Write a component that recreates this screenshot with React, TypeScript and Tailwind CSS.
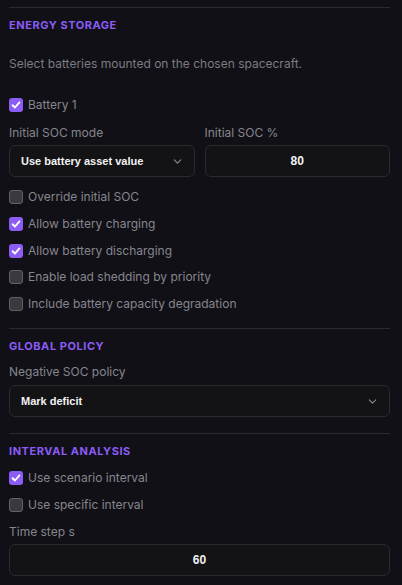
import { ChevronDown } from "lucide-react"

const sans = { fontFamily: "Inter, 'Noto Sans', sans-serif" }

function Check({ checked, label }: { checked: boolean; label: string }) {
  return (
    <div className="flex h-4 items-center gap-[5px]">
      {checked ? (
        <span className="flex h-[14px] w-[14px] items-center justify-center rounded-[3px] bg-[#8b5cf6]">
          <svg width="10" height="10" viewBox="0 0 10 10">
            <path d="M1.6 5.2 L4 7.5 L8.4 2.4" fill="none" stroke="#fff" strokeWidth="1.9" strokeLinecap="round" strokeLinejoin="round" />
          </svg>
        </span>
      ) : (
        <span className="h-[14px] w-[14px] rounded-[3px] border border-[#606066] bg-[#3a3a3e]" />
      )}
      <span className="text-[12px] leading-4 text-[#86868d]">{label}</span>
    </div>
  )
}

function Heading({ children, className }: { children: string; className: string }) {
  return (
    <div className={`text-[11px] font-bold leading-4 tracking-[0.05em] text-[#8b5cf6] ${className}`}>
      {children}
    </div>
  )
}

function Select({ value }: { value: string }) {
  return (
    <div className="flex h-[32px] items-center justify-between rounded-md border border-[#2a2a2f] bg-[#131316] pl-[11px] pr-[10px]">
      <span className="text-[11px] font-bold text-[#f2f2f2]" style={{ fontFamily: "'Liberation Sans', Arial, sans-serif" }}>
        {value}
      </span>
      <ChevronDown size={13} strokeWidth={2} className="text-[#8a8a90]" />
    </div>
  )
}

function NumInput({ value }: { value: string }) {
  return (
    <div className="flex h-[32px] items-center justify-center rounded-md border border-[#2a2a2f] bg-[#131316]">
      <span className="text-[12px] font-bold text-[#f2f2f2]" style={{ fontFamily: "'Liberation Sans', Arial, sans-serif" }}>
        {value}
      </span>
    </div>
  )
}

export default function App() {
  return (
    <div className="h-[585px] w-[402px] overflow-hidden bg-[#111016] pl-[9px]" style={sans}>
      <div className="flex w-[381px] flex-col">
        <div className="mt-[7px] h-px bg-[#2a2a30]" />
        <Heading className="mt-[9px]">ENERGY STORAGE</Heading>
        <div className="mt-[23px] text-[12px] leading-4 text-[#7c7c83]">
          Select batteries mounted on the chosen spacecraft.
        </div>
        <div className="mt-[25px]">
          <Check checked label="Battery 1" />
        </div>

        <div className="mt-[12px] grid grid-cols-2 gap-x-[10px]">
          <div className="text-[12px] leading-4 text-[#86868d]">Initial SOC mode</div>
          <div className="text-[12px] leading-4 text-[#86868d]">Initial SOC %</div>
          <div className="mt-[4px]">
            <Select value="Use battery asset value" />
          </div>
          <div className="mt-[4px]">
            <NumInput value="80" />
          </div>
        </div>

        <div className="mt-3 flex flex-col gap-[10.75px]">
          <Check checked={false} label="Override initial SOC" />
          <Check checked label="Allow battery charging" />
          <Check checked label="Allow battery discharging" />
          <Check checked={false} label="Enable load shedding by priority" />
          <Check checked={false} label="Include battery capacity degradation" />
        </div>

        <div className="mt-4 h-px bg-[#2a2a30]" />
        <Heading className="mt-[9px]">GLOBAL POLICY</Heading>
        <div className="mt-[10px] text-[12px] leading-4 text-[#86868d]">Negative SOC policy</div>
        <div className="mt-[5px]">
          <Select value="Mark deficit" />
        </div>

        <div className="mt-4 h-px bg-[#2a2a30]" />
        <Heading className="mt-[9px]">INTERVAL ANALYSIS</Heading>
        <div className="mt-[11px] flex flex-col gap-[11px]">
          <Check checked label="Use scenario interval" />
          <Check checked={false} label="Use specific interval" />
        </div>
        <div className="mt-[11px] text-[12px] leading-4 text-[#86868d]">Time step s</div>
        <div className="mt-1">
          <NumInput value="60" />
        </div>
      </div>
    </div>
  )
}
